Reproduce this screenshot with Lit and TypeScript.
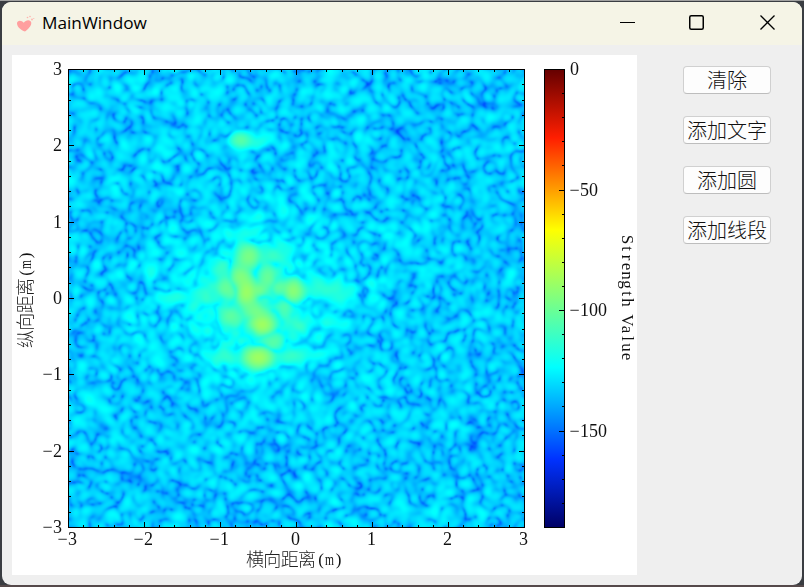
import { LitElement, html, svg, css } from "lit";
import { customElement } from "lit/decorators.js";

const STOPS: [number, number[]][] = [
  [0, [0, 0, 100]],
  [0.15, [0, 50, 255]],
  [0.35, [0, 255, 255]],
  [0.65, [255, 255, 0]],
  [0.85, [255, 30, 0]],
  [1, [100, 0, 0]],
];

function jet(t: number): number[] {
  t = Math.max(0, Math.min(1, t));
  let i = 1;
  while (i < STOPS.length - 1 && t > STOPS[i][0]) i++;
  const [a, ca] = STOPS[i - 1];
  const [b, cb] = STOPS[i];
  const k = (t - a) / (b - a);
  return ca.map((v, n) => v + (cb[n] - v) * k);
}

// Point scatterers: x, y in plot pixels, peak dB, horizontal and vertical radius
const TARGETS: number[][] = [
  [172, 71, -104, 7, 5], [192, 73, -118, 8, 5],
  [180, 187, -96, 7, 7], [172, 207, -95, 7, 7], [178, 223, -89, 6, 9],
  [190, 221, -100, 5, 5], [199, 208, -101, 6, 9], [159, 218, -101, 8, 8],
  [225, 221, -93, 6, 7], [210, 219, -104, 6, 6], [194, 255, -88, 7, 6],
  [190, 288, -88, 8, 6], [187, 243, -99, 8, 6], [215, 240, -106, 6, 9],
  [163, 248, -105, 9, 9], [228, 255, -110, 8, 6], [205, 273, -104, 8, 8],
  [155, 198, -113, 10, 6], [135, 226, -115, 18, 9], [255, 220, -115, 20, 6],
  [157, 287, -114, 12, 6], [219, 286, -112, 13, 6], [263, 254, -119, 15, 5],
  [252, 285, -119, 11, 5], [104, 226, -121, 12, 6], [130, 254, -119, 16, 6],
  [177, 165, -118, 12, 6], [205, 187, -111, 12, 7], [185, 150, -123, 9, 7],
];

@customElement("strength-map")
export class StrengthMap extends LitElement {
  static styles = css`
    :host { display: block; width: 456px; height: 458px; }
    .map { display: block; }
  `;

  render() {
    return html`<canvas class="map" width="456" height="458"></canvas>`;
  }

  private blur(a: Float32Array, w: number, h: number, sigma: number): Float32Array {
    const r = Math.ceil(sigma * 3);
    const kern: number[] = [];
    for (let i = -r; i <= r; i++) kern.push(Math.exp((-i * i) / (2 * sigma * sigma)));
    const sum = kern.reduce((p, v) => p + v, 0);
    const pass = (s: Float32Array, dx: number, dy: number) => {
      const out = new Float32Array(w * h);
      for (let y = 0; y < h; y++)
        for (let x = 0; x < w; x++) {
          let v = 0;
          for (let k = -r; k <= r; k++) {
            const xx = (x + k * dx + w) % w;
            const yy = (y + k * dy + h) % h;
            v += s[yy * w + xx] * kern[k + r];
          }
          out[y * w + x] = v / sum;
        }
      return out;
    };
    return pass(pass(a, 1, 0), 0, 1);
  }

  private noise(w: number, h: number, seed: number): Float32Array {
    let s = seed;
    const rnd = () => {
      s = (s + 0x6d2b79f5) | 0;
      let t = Math.imul(s ^ (s >>> 15), 1 | s);
      t = (t + Math.imul(t ^ (t >>> 7), 61 | t)) ^ t;
      return ((t ^ (t >>> 14)) >>> 0) / 4294967296;
    };
    const src = new Float32Array(w * h);
    for (let i = 0; i < src.length; i++) src[i] = rnd() + rnd() + rnd() - 1.5;
    const out = this.blur(src, w, h, 3.5);
    let e = 0;
    for (const v of out) e += v * v;
    const n = Math.sqrt((2 * e) / out.length);
    return out.map((v) => v / n);
  }

  firstUpdated() {
    const canvas = this.renderRoot.querySelector("canvas")!;
    const g = canvas.getContext("2d")!;
    const w = 456;
    const h = 458;
    const re = this.noise(w, h, 17);
    const im = this.noise(w, h, 901);
    const db = new Float32Array(w * h);
    for (let y = 0; y < h; y++)
      for (let x = 0; x < w; x++) {
        const i = y * w + x;
        const core = Math.exp(-(((x - 188) / 48) ** 2) - ((y - 238) / 55) ** 2);
        const halo = Math.exp(-(((x - 185) / 125) ** 2) - ((y - 232) / 55) ** 2);
        const wide = Math.exp(-(((x - 190) / 210) ** 2) - ((y - 200) / 230) ** 2);
        const gain = 10 ** ((-132 + 2 * wide + 3.5 * halo + 12 * core) / 20);
        let a = gain * re[i];
        let b = gain * im[i];
        TARGETS.forEach(([tx, ty, peak, rx, ry], n) => {
          const d = ((x - tx) / rx) ** 2 + ((y - ty) / ry) ** 2;
          if (d > 9) return;
          const amp = 10 ** ((peak - 5.5 * d) / 20);
          a += amp * Math.cos(n * 0.7);
          b += amp * Math.sin(n * 0.7);
        });
        const base = gain * gain * (0.0006 + 0.35 * core);
        db[i] = 10 * Math.log10(a * a + b * b + base);
      }
    const level = this.blur(db, w, h, 0.9);
    const img = g.createImageData(w, h);
    for (let i = 0; i < level.length; i++) {
      const c = jet(1 + level[i] / 190);
      img.data[i * 4] = c[0];
      img.data[i * 4 + 1] = c[1];
      img.data[i * 4 + 2] = c[2];
      img.data[i * 4 + 3] = 255;
    }
    g.putImageData(img, 0, 0);
  }
}

@customElement("app-root")
export class AppRoot extends LitElement {
  static styles = css`
    :host {
      display: block;
      width: 804px;
      height: 587px;
      box-sizing: border-box;
      padding: 2px;
      background: linear-gradient(#a0a0a0 0 1px, #3a3d42 1px 585px, #55494a 585px);
      overflow: hidden;
    }
    .window {
      height: 583px;
      display: flex;
      flex-direction: column;
      background: #efefef;
      border-radius: 9px;
      overflow: hidden;
    }
    .titlebar {
      height: 43px;
      flex: none;
      display: flex;
      align-items: center;
      background: #f5f4e6;
    }
    .titlebar svg { display: block; }
    .heart { margin-left: 13px; }
    .title {
      flex: 1;
      margin-left: 6px;
      padding-bottom: 1px;
      font: 17.2px/24px "Open Sans", "Noto Sans", sans-serif;
      color: #000;
    }
    .controls { width: 200px; }
    .body {
      flex: 1;
      display: flex;
      align-items: flex-start;
      padding: 10px 0 0 10px;
    }
    .plot {
      width: 625px;
      height: 520px;
      background: #fff;
      display: grid;
    }
    .plot > * { grid-area: 1 / 1; }
    .field { margin: 14px 0 0 56px; }
    .axes { display: block; z-index: 1; }
    .num {
      font: 18px "Liberation Serif", serif;
      fill: #111;
    }
    .label {
      font: 300 18px "Noto Sans CJK SC", sans-serif;
      fill: #222;
    }
    .latin {
      font: 17px "Liberation Serif", serif;
      fill: #111;
      text-anchor: middle;
    }
    .line { stroke: #000; fill: none; shape-rendering: crispEdges; }
    .side {
      margin: 11px 0 0 46px;
      display: flex;
      flex-direction: column;
      gap: 22px;
    }
    .btn {
      width: 88px;
      height: 28px;
      box-sizing: border-box;
      padding: 0;
      border: 1px solid #d0d0d0;
      border-bottom-color: #bdbdbd;
      border-radius: 4px;
      background: #fdfdfd;
      color: #111;
      font: 300 20px/24px "Noto Sans CJK SC", sans-serif;
      white-space: nowrap;
      display: flex;
      justify-content: center;
      align-items: center;
    }
  `;

  private axes() {
    let d = "";
    for (let i = 0; i <= 30; i++) {
      const n = i % 5 === 0 ? 5 : 2;
      const x = Math.round(56 + i * 15.2) + 0.5;
      const y = Math.round(14 + (i * 458) / 30) + 0.5;
      d += `M${x} 14v${n + 1}M${x} 473v-${n + 1}M56 ${y}h${n + 1}M513 ${y}h-${n + 1}`;
    }
    for (let i = 0; i <= 19; i++) {
      const n = i % 5 === 0 ? 5 : 2;
      d += `M553 ${Math.round(14 + (i * 458) / 19) + 0.5}h-${n + 1}`;
    }
    return d;
  }

  private num(x: number, y: number, t: string, end = false) {
    const neg = t[0] === "-";
    const digits = neg ? t.slice(1) : t;
    const w = digits.length * 9 + (neg ? 10 : 0);
    const left = end ? x - w : x;
    return svg`${neg ? svg`<text class="num" x=${left - 0.5} y=${y}>−</text>` : ""}
      <text class="num" x=${left + (neg ? 10 : 0)} y=${y}>${digits}</text>`;
  }

  // Fixed-pitch cells, 9px each
  private cells(t: string) {
    return [...t].map((_, i) => 4.5 + i * 9).join(" ");
  }

  private axisName(t: string, transform: string) {
    return svg`<g transform=${transform}>
      <text class="label" x="0" y="0" textLength="70">${t}</text>
      <text class="latin" x="75" y="-1">(</text>
      <text class="latin" transform="translate(83.500 -1) scale(.68 1)">m</text>
      <text class="latin" x="92.500" y="-1">)</text>
    </g>`;
  }

  render() {
    return html`
      <div class="window">
        <div class="titlebar">
          <svg class="heart" width="21" height="20" viewBox="0 0 21 20">
            <path d="M10 17.500C6 16.300 2 12.800 2 9.200C2 6 6.800 5.800 8.800 8.800C10.500 5.500 16 5 16.300 8.800C16.500 12 12.800 15.500 10 17.500Z" fill="#ff9f9f" />
            <g fill="#ffb3ad"><circle cx="12.500" cy="3.500" r=".8" /><circle cx="15" cy="2.500" r=".8" /><circle cx="17" cy="5.500" r=".9" /><circle cx="18.800" cy="4.500" r=".6" /></g>
          </svg>
          <div class="title">MainWindow</div>
          <svg class="controls" width="200" height="43" viewBox="602 2 200 43" fill="none" stroke="#000">
            <path d="M620 22.500h15" stroke-width="1" />
            <rect x="689.750" y="15.750" width="13.500" height="13.500" rx="1.500" stroke-width="1.500" />
            <path d="M760.500 15.500l14 14M774.500 15.500l-14 14" stroke-width="1.300" />
          </svg>
        </div>
        <div class="body">
          <div class="plot">
            <strength-map class="field"></strength-map>
            <svg class="axes" width="625" height="520">
              <defs>
                <linearGradient id="jet" x1="0" y1="1" x2="0" y2="0">
                  ${STOPS.map(([o, c]) => svg`<stop offset=${o} stop-color=${`rgb(${c})`} />`)}
                </linearGradient>
              </defs>
              <rect x="532" y="14" width="21" height="459" fill="url(#jet)" />
              <rect class="line" x="532.500" y="14.500" width="20" height="458" />
              <rect class="line" x="56.500" y="14.500" width="456" height="458" />
              <path class="line" d=${this.axes()} />
              ${[3, 2, 1, 0, -1, -2, -3].map((v, i) => this.num(50, 20 + i * 76.33, String(v), true))}
              ${[-3, -2, -1, 0, 1, 2, 3].map((v, i) => {
                const w = v < 0 ? 19 : 9;
                return this.num(55.5 + i * 76 - w / 2, 490, String(v));
              })}
              ${[0, -50, -100, -150].map((v) => this.num(558, 20 - (v / 190) * 458, String(v)))}
              ${this.axisName("横向距离", "translate(234 511)")}
              ${this.axisName("纵向距离", "translate(20 293) rotate(-90)")}
              <text class="latin" transform="translate(610 180) rotate(90)" x=${this.cells("Strength Value")} y="0">Strength Value</text>
            </svg>
          </div>
          <div class="side">
            ${["清除", "添加文字", "添加圆", "添加线段"].map((t) => html`<button class="btn">${t}</button>`)}
          </div>
        </div>
      </div>
    `;
  }
}
